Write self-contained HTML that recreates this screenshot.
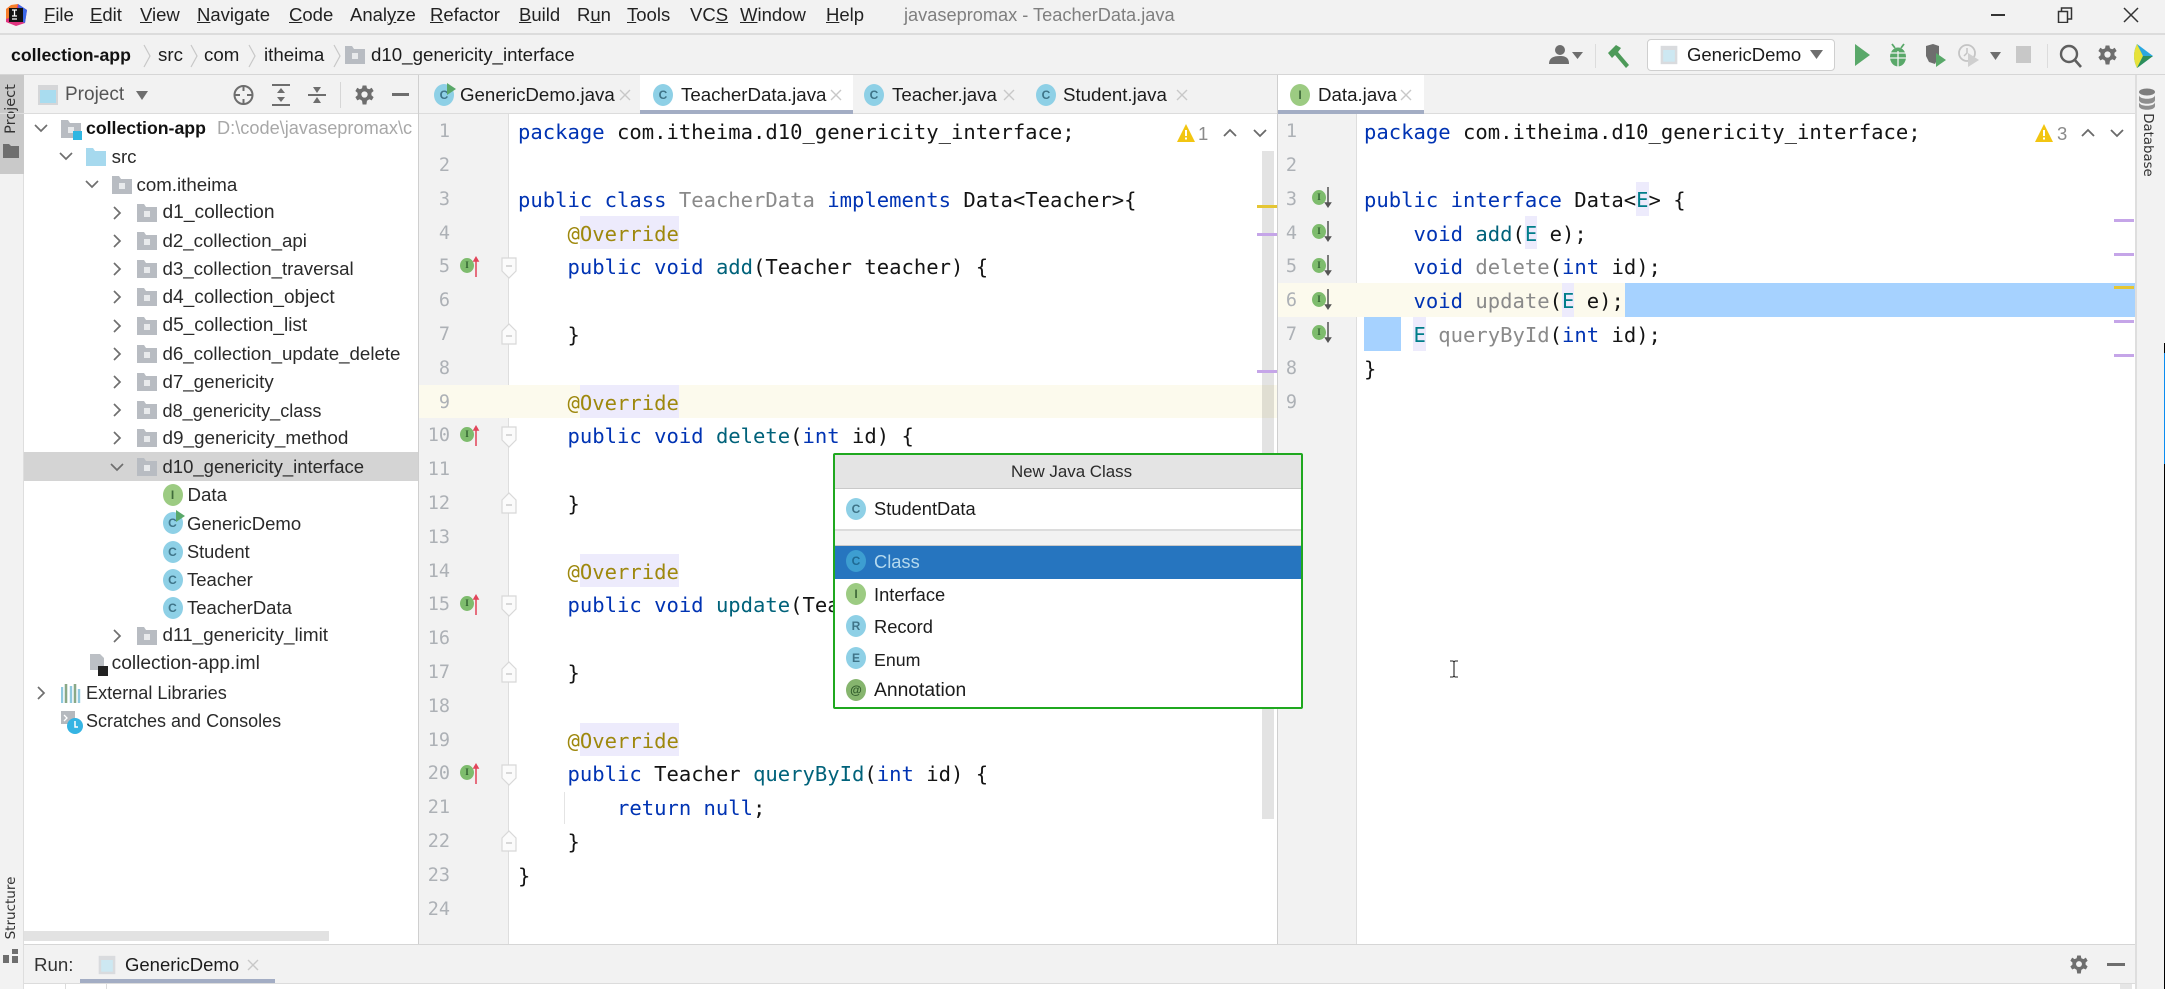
<!DOCTYPE html>
<html lang="en"><head><meta charset="utf-8"><title>javasepromax - TeacherData.java</title>
<style>
html,body{margin:0;padding:0;width:2165px;height:989px;overflow:hidden;background:#fff}
#r{position:relative;width:2165px;height:989px;overflow:hidden;background:#f2f2f2;font-family:"Liberation Sans",sans-serif;font-size:18.7px;color:#1c1c1c;filter:blur(.35px)}
#r div,#r svg{position:absolute}
.b{white-space:pre;line-height:28px;height:28px}
.m{white-space:pre;top:1px;line-height:28px;height:28px;color:#222;font-size:18.5px}
.t{white-space:pre;line-height:28px;height:28px;color:#2a2a2a}
.c{white-space:pre;height:33.8px;line-height:36.6px;font-family:"DejaVu Sans Mono","Liberation Mono",monospace;font-size:20.55px;color:#141414}
.n{height:33.8px;line-height:36.6px;font-family:"DejaVu Sans Mono","Liberation Mono",monospace;font-size:18.5px;color:#adb1b6;text-align:right;width:30px}
.k{color:#0033b3}.g{color:#8a8a8a}.f{color:#00627a}.o{color:#9e880d}.e{color:#007e8a}
.h{background:#edebfc;display:inline-block;height:33.8px;vertical-align:top;line-height:36.6px}
.ic{border-radius:50%;text-align:center;font-family:"Liberation Sans",sans-serif;font-weight:bold;width:20px;height:22px;line-height:22px;font-size:12px}
.C{background:#8ed0e6;color:#3f7488}.I{background:#9ccb82;color:#3f6a3a}.R{background:#8ed0e6;color:#3f7488}
.gi{width:14px;height:15px;line-height:15px;border-radius:50%;background:#7ebc6d;color:#2f5f2f;font:bold 9px/15px "Liberation Serif",serif;text-align:center}
.mk{height:3px;width:20px}
</style></head><body><div id="r">
<svg width="0" height="0" style="left:0;top:0"><defs>
<symbol id="fo" viewBox="0 0 20 18"><path d="M0 0h7l2 3h11v15H0z" fill="#b8bcc2"/><rect x="7" y="7" width="6" height="6" fill="#e8eaec"/></symbol>
<symbol id="fs" viewBox="0 0 16 24"><path d="M1 2h14v13l-7 7-7-7z" fill="#fbfbfb" stroke="#d8d8d8" stroke-width="1.2"/><path d="M5 10h6" stroke="#c2c2c2" stroke-width="1.2"/></symbol>
<symbol id="fe" viewBox="0 0 16 24"><path d="M1 22h14V9L8 2 1 9z" fill="#fbfbfb" stroke="#d8d8d8" stroke-width="1.2"/><path d="M5 14h6" stroke="#c2c2c2" stroke-width="1.2"/></symbol>
<symbol id="cr" viewBox="0 0 12 16"><path d="M3 2l6 6-6 6" fill="none" stroke="#6f6f6f" stroke-width="1.7"/></symbol>
<symbol id="cd" viewBox="0 0 16 12"><path d="M2 3l6 6 6-6" fill="none" stroke="#6f6f6f" stroke-width="1.7"/></symbol>
<symbol id="up" viewBox="0 0 10 22"><path d="M5 4v18" stroke="#e2455a" stroke-width="1.6"/><path d="M1.500 6L5 0l3.500 6z" fill="#e2455a"/></symbol>
<symbol id="dn" viewBox="0 0 10 22"><path d="M5 0v18" stroke="#555" stroke-width="1.6"/><path d="M1 16l4 6 4-6z" fill="#555"/></symbol>
<symbol id="wa" viewBox="0 0 18 18"><path d="M9 0l9 18H0z" fill="#f2c511"/><path d="M8 6h2v6H8zM8 13.500h2v2H8z" fill="#fff"/></symbol>
<symbol id="sep" viewBox="0 0 10 24"><path d="M2 1l6 11-6 11" fill="none" stroke="#c8c8c8" stroke-width="1.2"/></symbol>
<symbol id="gear" viewBox="0 0 20 20"><path d="M8 0h4l.6 3 2.400 1 2.600-1.600 2 3.400-2.300 2 0 2.400 2.300 2-2 3.400L15 14.500 12.600 16 12 20H8l-.6-4L5 14.500 2.400 15.600l-2-3.400 2.300-2v-2.400l-2.300-2 2-3.400L5 4l2.400-1z" fill="#6e6e6e"/><circle cx="10" cy="9.500" r="3.300" fill="#f2f2f2"/></symbol>
<symbol id="ap" viewBox="0 0 24 24"><rect x="2" y="1" width="20" height="22" fill="#d9dbde"/><rect x="5" y="6" width="14" height="14" fill="#cde8f2"/></symbol>
<symbol id="xx" viewBox="0 0 12 12"><path d="M1 1l10 10M11 1L1 11" stroke="#c8c8c8" stroke-width="1.400"/></symbol>
</defs></svg>

<!-- title bar -->
<div style="left:0;top:33px;width:2165px;height:2px;background:#dcdcdc"></div>
<svg style="left:4px;top:3px" width="24" height="24" viewBox="0 0 24 24"><path d="M2 6L14 1l9 6-2 13-9 3-10-4z" fill="#e0337f"/><path d="M2 6L7 2l7-1-4 12-8 3z" fill="#f77e2c"/><path d="M14 1l9 6-2 13-5-2z" fill="#3b68e8"/><rect x="5" y="5" width="14" height="14" fill="#111"/><path d="M8 7h5M10.500 7v6M8 13h5M8 16h5" stroke="#fff" stroke-width="1.300"/></svg>
<div class="m" style="left:44px"><u>F</u>ile</div>
<div class="m" style="left:90px"><u>E</u>dit</div>
<div class="m" style="left:140px"><u>V</u>iew</div>
<div class="m" style="left:197px"><u>N</u>avigate</div>
<div class="m" style="left:289px"><u>C</u>ode</div>
<div class="m" style="left:350px">Anal<u>y</u>ze</div>
<div class="m" style="left:430px"><u>R</u>efactor</div>
<div class="m" style="left:519px"><u>B</u>uild</div>
<div class="m" style="left:577px">R<u>u</u>n</div>
<div class="m" style="left:627px"><u>T</u>ools</div>
<div class="m" style="left:690px">VC<u>S</u></div>
<div class="m" style="left:740px"><u>W</u>indow</div>
<div class="m" style="left:826px"><u>H</u>elp</div>
<div class="m" style="left:904px;color:#7f7f7f;font-size:18.2px">javasepromax - TeacherData.java</div>
<div style="left:1991px;top:14px;width:14px;height:2px;background:#333"></div>
<svg style="left:2057px;top:7px" width="16" height="16" viewBox="0 0 16 16"><path d="M1.500 4.500h9v11h-9zM4.500 4V1h10v11H11" fill="none" stroke="#333" stroke-width="1.500"/></svg>
<svg style="left:2123px;top:7px" width="16" height="16" viewBox="0 0 16 16"><path d="M1 1l14 14M15 1L1 15" stroke="#333" stroke-width="1.500"/></svg>

<!-- nav bar -->
<div style="left:0;top:74px;width:2165px;height:1px;background:#d6d6d6"></div>
<div class="b" style="left:11px;top:41px;font-weight:bold;font-size:17.7px;color:#111">collection-app</div>
<svg style="left:142px;top:44px" width="10" height="24"><use href="#sep"/></svg>
<div class="b" style="left:158px;top:41px">src</div>
<svg style="left:189px;top:44px" width="10" height="24"><use href="#sep"/></svg>
<div class="b" style="left:204px;top:41px">com</div>
<svg style="left:247px;top:44px" width="10" height="24"><use href="#sep"/></svg>
<div class="b" style="left:264px;top:41px">itheima</div>
<svg style="left:332px;top:44px" width="10" height="24"><use href="#sep"/></svg>
<svg style="left:345px;top:46px" width="20" height="18"><use href="#fo"/></svg>
<div class="b" style="left:371px;top:41px">d10_genericity_interface</div>

<svg style="left:1548px;top:44px" width="22" height="20" viewBox="0 0 22 20"><circle cx="12" cy="6" r="5" fill="#6e6e6e"/><path d="M1 20c0-6 4-8 11-8s9 3 9 8z" fill="#6e6e6e"/></svg>
<svg style="left:1572px;top:52px" width="12" height="7"><path d="M0 0h11L5.500 7z" fill="#6e6e6e"/></svg>
<div style="left:1595px;top:44px;width:1px;height:24px;background:#dcdcdc"></div>
<svg style="left:1607px;top:44px" width="24" height="24" viewBox="0 0 24 24"><path d="M1 9l8-8 5 3-3 4 11 13-3 3L8 11l-3 3z" fill="#4d9a59"/></svg>
<div style="left:1647px;top:39px;width:186px;height:30px;background:#fff;border:1.500px solid #cfcfcf;border-radius:4px"></div>
<svg style="left:1659px;top:44px" width="20" height="22"><use href="#ap"/></svg>
<div class="b" style="left:1687px;top:41px;font-size:18.500px">GenericDemo</div>
<svg style="left:1810px;top:50px" width="14" height="9"><path d="M0 0h13L6.500 9z" fill="#6e6e6e"/></svg>
<svg style="left:1855px;top:44px" width="16" height="22"><path d="M0 0l15 11L0 22z" fill="#59a869"/></svg>
<svg style="left:1888px;top:43px" width="20" height="24" viewBox="0 0 20 24"><path d="M4 1l3 4M16 1l-3 4" stroke="#59a869" stroke-width="1.800" fill="none"/><ellipse cx="10" cy="14" rx="8" ry="9.500" fill="#59a869"/><path d="M2 10h16M2 15h16M10 8v16" stroke="#f2f2f2" stroke-width="1.300"/></svg>
<svg style="left:1925px;top:43px" width="22" height="24" viewBox="0 0 22 24"><path d="M1 3l7-2 6 2v10l-4 8-6-2-3-6z" fill="#6e6e6e"/><path d="M11 10l10 7-10 7z" fill="#59a869"/></svg>
<svg style="left:1958px;top:43px" width="22" height="24" viewBox="0 0 22 24"><circle cx="9" cy="10" r="8" fill="none" stroke="#c4c4c4" stroke-width="1.800"/><path d="M9 5v5l-3 3" stroke="#c4c4c4" stroke-width="1.500" fill="none"/><path d="M10 10l11 7-11 7z" fill="#cfcfcf"/></svg>
<svg style="left:1990px;top:52px" width="12" height="8"><path d="M0 0h11L5.500 8z" fill="#6e6e6e"/></svg>
<div style="left:2016px;top:46px;width:15px;height:17px;background:#c8c8c8"></div>
<div style="left:2047px;top:44px;width:1px;height:24px;background:#dcdcdc"></div>
<svg style="left:2059px;top:44px" width="24" height="24" viewBox="0 0 24 24"><circle cx="10" cy="10" r="8" fill="none" stroke="#5f5f5f" stroke-width="2.400"/><path d="M15 15l7 8" stroke="#5f5f5f" stroke-width="2.600"/></svg>
<svg style="left:2098px;top:45px" width="19" height="20"><use href="#gear"/></svg>
<svg style="left:2134px;top:44px" width="20" height="24" viewBox="0 0 20 24"><path d="M3 0l16 12L3 24C-1 16-1 8 3 0z" fill="#2aa7e0"/><path d="M3 0c-4 8-4 16 0 24l6-12z" fill="#e7e23a"/><path d="M9 12L3 24l16-12z" fill="#2d8e5a"/></svg>

<!-- tool stripes -->
<div style="left:0;top:75px;width:24px;height:914px;background:#f2f2f2;border-right:1px solid #dedede;box-sizing:border-box"></div>
<div style="left:0;top:75px;width:24px;height:99px;background:#c9c9c9"></div>
<div style="left:-24px;top:99px;width:70px;height:20px;line-height:20px;text-align:center;transform:rotate(-90deg);font-size:14.500px;font-family:'DejaVu Sans',sans-serif;color:#333">Project</div>
<svg style="left:3px;top:144px" width="16" height="14"><path d="M0 0h6l2 2h8v12H0z" fill="#6e6e6e"/></svg>
<div style="left:-29px;top:898px;width:80px;height:20px;line-height:20px;text-align:center;transform:rotate(-90deg);font-size:13.500px;font-family:'DejaVu Sans',sans-serif;color:#333">Structure</div>
<svg style="left:3px;top:949px" width="16" height="15"><path d="M9 0h6v5H9zM0 6h6v8H0zM9 7h6v7H9z" fill="#6e6e6e"/></svg>

<div style="left:2135px;top:75px;width:29px;height:914px;background:#f2f2f2;border-left:2px solid #dedede;box-sizing:border-box"></div>
<svg style="left:2138px;top:88px" width="18" height="22" viewBox="0 0 18 22"><ellipse cx="9" cy="4" rx="8" ry="3.500" fill="#7e7e7e"/><path d="M1 7c0 5 16 5 16 0v5c0 5-16 5-16 0zM1 14c0 5 16 5 16 0v4c0 5-16 5-16 0z" fill="#8e8e8e"/></svg>
<div style="left:2114px;top:135px;width:66px;height:20px;line-height:20px;text-align:center;transform:rotate(90deg);font-size:13.300px;font-family:'DejaVu Sans',sans-serif;color:#333">Database</div>
<div style="left:2164px;top:343px;width:1px;height:646px;background:#000"></div>
<div style="left:2164px;top:353px;width:1px;height:111px;background:#0a8cf0"></div>

<!-- project panel -->
<div style="left:24px;top:75px;width:395px;height:38px;background:#f2f2f2"></div>
<svg style="left:38px;top:85px" width="20" height="20" viewBox="0 0 20 20"><rect width="20" height="20" fill="#d5d6d8"/><rect x="2" y="5" width="16" height="13" fill="#a9dcef"/></svg>
<div class="b" style="left:65px;top:81px;color:#555;font-size:19px">Project</div>
<svg style="left:136px;top:91px" width="13" height="9"><path d="M0 0h12L6 9z" fill="#6e6e6e"/></svg>
<svg style="left:233px;top:84px" width="21" height="22" viewBox="0 0 21 22"><circle cx="10.500" cy="11" r="9" fill="none" stroke="#6e6e6e" stroke-width="2"/><path d="M10.500 1v6M10.500 15v6M1 11h6M14 11h6" stroke="#6e6e6e" stroke-width="2"/></svg>
<svg style="left:272px;top:84px" width="18" height="22" viewBox="0 0 18 22"><path d="M0 1h18M0 21h18" stroke="#6e6e6e" stroke-width="2"/><path d="M9 4l4 5H5zM9 18l4-5H5z" fill="#6e6e6e"/></svg>
<svg style="left:308px;top:84px" width="18" height="22" viewBox="0 0 18 22"><path d="M0 11h18" stroke="#6e6e6e" stroke-width="2"/><path d="M9 9l4-6H5zM9 13l4 6H5z" fill="#6e6e6e"/></svg>
<div style="left:340px;top:82px;width:1px;height:26px;background:#d6d6d6"></div>
<svg style="left:355px;top:85px" width="19" height="20"><use href="#gear"/></svg>
<div style="left:392px;top:93px;width:17px;height:3px;background:#6e6e6e"></div>
<div style="left:24px;top:113px;width:395px;height:876px;background:#fff"></div>
<div style="left:0;top:113px;width:2135px;height:1px;background:#dcdcdc"></div>
<div style="left:24px;top:452px;width:395px;height:29px;background:#d4d4d4"></div>

<!-- tree -->
<svg style="left:33px;top:122px" width="16" height="12"><use href="#cd"/></svg>
<svg style="left:61px;top:120px" width="20" height="18"><use href="#fo"/></svg><div style="left:73px;top:131px;width:9px;height:9px;background:#2fb6e2"></div>
<div class="t" style="left:86px;top:114px;font-weight:bold;font-size:17.700px;color:#111">collection-app</div>
<div class="t" style="left:217px;top:114px;width:202px;overflow:hidden;color:#a8a8a8;font-size:18.200px">D:\code\javasepromax\c</div>
<svg style="left:58px;top:150px" width="16" height="12"><use href="#cd"/></svg>
<svg style="left:86px;top:148px" width="20" height="18" viewBox="0 0 20 18"><path d="M0 0h7l2 3h11v15H0z" fill="#a6d9ee"/></svg>
<div class="t" style="left:111.600px;top:143px">src</div>
<svg style="left:84px;top:178px" width="16" height="12"><use href="#cd"/></svg>
<svg style="left:112px;top:176px" width="20" height="18"><use href="#fo"/></svg>
<div class="t" style="left:136.500px;top:171px">com.itheima</div>

<svg style="left:111px;top:205px" width="12" height="16"><use href="#cr"/></svg><svg style="left:137px;top:204px" width="20" height="18"><use href="#fo"/></svg><div class="t" style="left:162.500px;top:199px;font-size:19.200px">d1_collection</div>
<svg style="left:111px;top:233px" width="12" height="16"><use href="#cr"/></svg><svg style="left:137px;top:232px" width="20" height="18"><use href="#fo"/></svg><div class="t" style="left:162.500px;top:227px">d2_collection_api</div>
<svg style="left:111px;top:261px" width="12" height="16"><use href="#cr"/></svg><svg style="left:137px;top:260px" width="20" height="18"><use href="#fo"/></svg><div class="t" style="left:162.500px;top:255px">d3_collection_traversal</div>
<svg style="left:111px;top:289px" width="12" height="16"><use href="#cr"/></svg><svg style="left:137px;top:288px" width="20" height="18"><use href="#fo"/></svg><div class="t" style="left:162.500px;top:284px;font-size:19px">d4_collection_object</div>
<svg style="left:111px;top:318px" width="12" height="16"><use href="#cr"/></svg><svg style="left:137px;top:317px" width="20" height="18"><use href="#fo"/></svg><div class="t" style="left:162.500px;top:312px;font-size:19px">d5_collection_list</div>
<svg style="left:111px;top:346px" width="12" height="16"><use href="#cr"/></svg><svg style="left:137px;top:345px" width="20" height="18"><use href="#fo"/></svg><div class="t" style="left:162.500px;top:340px">d6_collection_update_delete</div>
<svg style="left:111px;top:374px" width="12" height="16"><use href="#cr"/></svg><svg style="left:137px;top:373px" width="20" height="18"><use href="#fo"/></svg><div class="t" style="left:162.500px;top:368px">d7_genericity</div>
<svg style="left:111px;top:402px" width="12" height="16"><use href="#cr"/></svg><svg style="left:137px;top:401px" width="20" height="18"><use href="#fo"/></svg><div class="t" style="left:162.500px;top:397px;font-size:18.100px">d8_genericity_class</div>
<svg style="left:111px;top:430px" width="12" height="16"><use href="#cr"/></svg><svg style="left:137px;top:429px" width="20" height="18"><use href="#fo"/></svg><div class="t" style="left:162.500px;top:425px;font-size:18.900px">d9_genericity_method</div>
<svg style="left:109px;top:461px" width="16" height="12"><use href="#cd"/></svg><svg style="left:137px;top:458px" width="20" height="18"><use href="#fo"/></svg><div class="t" style="left:162.500px;top:453px;font-size:18.500px">d10_genericity_interface</div>

<div class="ic I" style="left:162.500px;top:484px">I</div><div class="t" style="left:187.500px;top:481px">Data</div>
<div class="ic C" style="left:162.500px;top:512px">C</div><svg style="left:176px;top:510px" width="9" height="12"><path d="M0 0l9 6-9 6z" fill="#59a869"/></svg><div class="t" style="left:187px;top:509.500px;font-size:18.500px">GenericDemo</div>
<div class="ic C" style="left:162.500px;top:540.500px">C</div><div class="t" style="left:187px;top:537.500px;font-size:18.200px">Student</div>
<div class="ic C" style="left:162.500px;top:569px">C</div><div class="t" style="left:187px;top:566px;font-size:18.500px">Teacher</div>
<div class="ic C" style="left:162.500px;top:597px">C</div><div class="t" style="left:187px;top:594px;font-size:18.500px">TeacherData</div>
<svg style="left:111px;top:628px" width="12" height="16"><use href="#cr"/></svg><svg style="left:137px;top:627px" width="20" height="18"><use href="#fo"/></svg><div class="t" style="left:162.500px;top:622px;font-size:18.900px">d11_genericity_limit</div>
<svg style="left:88px;top:654px" width="20" height="22" viewBox="0 0 20 22"><path d="M2 0h10l4 4v12H2z" fill="#bcc0c5"/><rect x="10" y="12" width="10" height="10" fill="#222"/></svg>
<div class="t" style="left:111.600px;top:650px;font-size:19.200px">collection-app.iml</div>
<svg style="left:35px;top:685px" width="12" height="16"><use href="#cr"/></svg>
<svg style="left:61px;top:683px" width="20" height="20" viewBox="0 0 20 20"><path d="M1 4v16M5 1v19M10 3v17M14 1v19M18 6v14" stroke-width="2.400" fill="none" stroke="#8fc9df"/><path d="M5 1v19M14 1v19" stroke="#8aa886" stroke-width="2.400"/></svg>
<div class="t" style="left:86px;top:679px;font-size:18.100px">External Libraries</div>
<svg style="left:60px;top:711px" width="24" height="24" viewBox="0 0 24 24"><rect x="1" y="0" width="14" height="13" fill="#b5b9be"/><path d="M4 4l3 3-3 3" stroke="#fff" fill="none" stroke-width="1.300"/><circle cx="15" cy="15" r="8" fill="#35b4e3"/><path d="M15 10v6h3" stroke="#fff" fill="none" stroke-width="1.500"/></svg>
<div class="t" style="left:86px;top:707px;font-size:18px">Scratches and Consoles</div>
<div style="left:24px;top:931px;width:305px;height:10px;background:#e2e2e2"></div>

<!-- tabs -->
<div style="left:418px;top:75px;width:1px;height:870px;background:#cfcfcf"></div>
<div style="left:1277px;top:75px;width:1px;height:870px;background:#cfcfcf"></div>
<div style="left:640px;top:75px;width:213px;height:38px;background:#fff"></div>
<div style="left:640px;top:110px;width:213px;height:4px;background:#a3adc4"></div>
<div style="left:1278px;top:75px;width:146px;height:38px;background:#fff"></div>
<div style="left:1278px;top:110px;width:146px;height:4px;background:#a3adc4"></div>

<div class="ic C" style="left:434px;top:84px">C</div><svg style="left:447px;top:83px" width="9" height="12"><path d="M0 0l9 6-9 6z" fill="#59a869"/></svg>
<div class="b" style="left:460px;top:81px">GenericDemo.java</div><svg style="left:619px;top:89px" width="12" height="12"><use href="#xx"/></svg>
<div class="ic C" style="left:653px;top:84px">C</div><div class="b" style="left:681px;top:81px">TeacherData.java</div><svg style="left:830px;top:89px" width="12" height="12"><use href="#xx"/></svg>
<div class="ic C" style="left:864px;top:84px">C</div><div class="b" style="left:892px;top:81px">Teacher.java</div><svg style="left:1003px;top:89px" width="12" height="12"><use href="#xx"/></svg>
<div class="ic C" style="left:1036px;top:84px">C</div><div class="b" style="left:1063px;top:81px">Student.java</div><svg style="left:1176px;top:89px" width="12" height="12"><use href="#xx"/></svg>
<div class="ic I" style="left:1290px;top:84px">I</div><div class="b" style="left:1318px;top:81px">Data.java</div><svg style="left:1400px;top:89px" width="12" height="12"><use href="#xx"/></svg>

<!-- editor 1 -->
<div style="left:419px;top:114px;width:858px;height:830px;background:#fff"></div>
<div style="left:419px;top:114px;width:89px;height:830px;background:#f2f2f2"></div>
<div style="left:508px;top:114px;width:1px;height:830px;background:#dedede"></div>
<div style="left:419px;top:384.600px;width:858px;height:33.800px;background:#fcfaed"></div>
<div style="left:1262px;top:151px;width:12px;height:668px;background:#e3e3e3"></div>
<div style="left:1262px;top:384.600px;width:12px;height:33.800px;background:#e0ded2"></div>
<div class="mk" style="left:1257px;top:205px;background:#e5c634"></div>
<div class="mk" style="left:1257px;top:233px;background:#c5a5e8"></div>
<div class="mk" style="left:1257px;top:370px;background:#c5a5e8"></div>
<svg style="left:1177px;top:124px" width="18" height="18"><use href="#wa"/></svg>
<div class="b" style="left:1198px;top:120px;color:#8a8a8a;font-size:18.500px">1</div>
<svg style="left:1222px;top:127px" width="16" height="10"><path d="M2 9l6-6 6 6" fill="none" stroke="#6a6a6a" stroke-width="1.800"/></svg>
<svg style="left:1252px;top:128px" width="16" height="10"><path d="M2 2l6 6 6-6" fill="none" stroke="#6a6a6a" stroke-width="1.800"/></svg>

<div class="n" style="left:420px;top:114.200px">1</div>
<div class="n" style="left:420px;top:148px">2</div>
<div class="n" style="left:420px;top:181.800px">3</div>
<div class="n" style="left:420px;top:215.600px">4</div>
<div class="n" style="left:420px;top:249.400px">5</div>
<div class="n" style="left:420px;top:283.200px">6</div>
<div class="n" style="left:420px;top:317px">7</div>
<div class="n" style="left:420px;top:350.800px">8</div>
<div class="n" style="left:420px;top:384.600px">9</div>
<div class="n" style="left:420px;top:418.400px">10</div>
<div class="n" style="left:420px;top:452.200px">11</div>
<div class="n" style="left:420px;top:486px">12</div>
<div class="n" style="left:420px;top:519.800px">13</div>
<div class="n" style="left:420px;top:553.600px">14</div>
<div class="n" style="left:420px;top:587.400px">15</div>
<div class="n" style="left:420px;top:621.200px">16</div>
<div class="n" style="left:420px;top:655px">17</div>
<div class="n" style="left:420px;top:688.800px">18</div>
<div class="n" style="left:420px;top:722.600px">19</div>
<div class="n" style="left:420px;top:756.400px">20</div>
<div class="n" style="left:420px;top:790.200px">21</div>
<div class="n" style="left:420px;top:824px">22</div>
<div class="n" style="left:420px;top:857.800px">23</div>
<div class="n" style="left:420px;top:891.600px">24</div>

<div class="gi" style="left:460px;top:258px">I</div><svg style="left:471px;top:256px" width="10" height="21"><use href="#up"/></svg>
<div class="gi" style="left:460px;top:427px">I</div><svg style="left:471px;top:425px" width="10" height="21"><use href="#up"/></svg>
<div class="gi" style="left:460px;top:596px">I</div><svg style="left:471px;top:594px" width="10" height="21"><use href="#up"/></svg>
<div class="gi" style="left:460px;top:765px">I</div><svg style="left:471px;top:763px" width="10" height="21"><use href="#up"/></svg>

<svg style="left:501px;top:256px" width="16" height="24"><use href="#fs"/></svg>
<svg style="left:501px;top:322px" width="16" height="24"><use href="#fe"/></svg>
<svg style="left:501px;top:425px" width="16" height="24"><use href="#fs"/></svg>
<svg style="left:501px;top:491px" width="16" height="24"><use href="#fe"/></svg>
<svg style="left:501px;top:594px" width="16" height="24"><use href="#fs"/></svg>
<svg style="left:501px;top:660px" width="16" height="24"><use href="#fe"/></svg>
<svg style="left:501px;top:763px" width="16" height="24"><use href="#fs"/></svg>
<svg style="left:501px;top:829px" width="16" height="24"><use href="#fe"/></svg>
<div style="left:564px;top:792px;width:1px;height:32px;background:#e4e4e4"></div>

<div class="c" style="left:518px;top:114.200px"><span class="k">package</span> com.itheima.d10_genericity_interface;</div>
<div class="c" style="left:518px;top:181.800px"><span class="k">public class</span> <span class="g">TeacherData</span> <span class="k">implements</span> Data&lt;Teacher&gt;{</div>
<div class="c" style="left:518px;top:215.600px">    <span class="o">@</span><span class="o h">Override</span></div>
<div class="c" style="left:518px;top:249.400px">    <span class="k">public void</span> <span class="f">add</span>(Teacher teacher) {</div>
<div class="c" style="left:518px;top:317px">    }</div>
<div class="c" style="left:518px;top:384.600px">    <span class="o">@</span><span class="o h">Override</span></div>
<div class="c" style="left:518px;top:418.400px">    <span class="k">public void</span> <span class="f">delete</span>(<span class="k">int</span> id) {</div>
<div class="c" style="left:518px;top:486px">    }</div>
<div class="c" style="left:518px;top:553.600px">    <span class="o">@</span><span class="o h">Override</span></div>
<div class="c" style="left:518px;top:587.400px">    <span class="k">public void</span> <span class="f">update</span>(Teacher teacher) {</div>
<div class="c" style="left:518px;top:655px">    }</div>
<div class="c" style="left:518px;top:722.600px">    <span class="o">@</span><span class="o h">Override</span></div>
<div class="c" style="left:518px;top:756.400px">    <span class="k">public</span> Teacher <span class="f">queryById</span>(<span class="k">int</span> id) {</div>
<div class="c" style="left:518px;top:790.200px">        <span class="k">return null</span>;</div>
<div class="c" style="left:518px;top:824px">    }</div>
<div class="c" style="left:518px;top:857.800px">}</div>

<!-- editor 2 -->
<div style="left:1278px;top:114px;width:857px;height:830px;background:#fff"></div>
<div style="left:1278px;top:114px;width:78px;height:830px;background:#f2f2f2"></div>
<div style="left:1356px;top:114px;width:1px;height:830px;background:#dedede"></div>
<div style="left:1278px;top:283.200px;width:347px;height:33.800px;background:#fcfaed"></div>
<div style="left:1625px;top:283.200px;width:510px;height:33.800px;background:#a6d2ff"></div>
<div style="left:1364px;top:317px;width:37px;height:33.800px;background:#a6d2ff"></div>
<div class="mk" style="left:2114px;top:219px;background:#c5a5e8"></div>
<div class="mk" style="left:2114px;top:253px;background:#c5a5e8"></div>
<div class="mk" style="left:2114px;top:286px;background:#e5c634"></div>
<div class="mk" style="left:2114px;top:320px;background:#c5a5e8"></div>
<div class="mk" style="left:2114px;top:354px;background:#c5a5e8"></div>
<svg style="left:2035px;top:124px" width="18" height="18"><use href="#wa"/></svg>
<div class="b" style="left:2057px;top:120px;color:#8a8a8a;font-size:18.500px">3</div>
<svg style="left:2080px;top:127px" width="16" height="10"><path d="M2 9l6-6 6 6" fill="none" stroke="#6a6a6a" stroke-width="1.800"/></svg>
<svg style="left:2109px;top:128px" width="16" height="10"><path d="M2 2l6 6 6-6" fill="none" stroke="#6a6a6a" stroke-width="1.800"/></svg>

<div class="n" style="left:1267px;top:114.200px">1</div>
<div class="n" style="left:1267px;top:148px">2</div>
<div class="n" style="left:1267px;top:181.800px">3</div>
<div class="n" style="left:1267px;top:215.600px">4</div>
<div class="n" style="left:1267px;top:249.400px">5</div>
<div class="n" style="left:1267px;top:283.200px">6</div>
<div class="n" style="left:1267px;top:317px">7</div>
<div class="n" style="left:1267px;top:350.800px">8</div>
<div class="n" style="left:1267px;top:384.600px">9</div>

<div class="gi" style="left:1312px;top:190px">I</div><svg style="left:1323px;top:187px" width="10" height="21"><use href="#dn"/></svg>
<div class="gi" style="left:1312px;top:224px">I</div><svg style="left:1323px;top:221px" width="10" height="21"><use href="#dn"/></svg>
<div class="gi" style="left:1312px;top:258px">I</div><svg style="left:1323px;top:255px" width="10" height="21"><use href="#dn"/></svg>
<div class="gi" style="left:1312px;top:292px">I</div><svg style="left:1323px;top:289px" width="10" height="21"><use href="#dn"/></svg>
<div class="gi" style="left:1312px;top:325px">I</div><svg style="left:1323px;top:322px" width="10" height="21"><use href="#dn"/></svg>

<div class="c" style="left:1364px;top:114.200px"><span class="k">package</span> com.itheima.d10_genericity_interface;</div>
<div class="c" style="left:1364px;top:181.800px"><span class="k">public interface</span> Data&lt;<span class="e h">E</span>&gt; {</div>
<div class="c" style="left:1364px;top:215.600px">    <span class="k">void</span> <span class="f">add</span>(<span class="e h">E</span> e);</div>
<div class="c" style="left:1364px;top:249.400px">    <span class="k">void</span> <span class="g">delete</span>(<span class="k">int</span> id);</div>
<div class="c" style="left:1364px;top:283.200px">    <span class="k">void</span> <span class="g">update</span>(<span class="e h">E</span> e);</div>
<div class="c" style="left:1364px;top:317px">    <span class="e h">E</span> <span class="g">queryById</span>(<span class="k">int</span> id);</div>
<div class="c" style="left:1364px;top:350.800px">}</div>

<svg style="left:1449px;top:660px" width="10" height="18" viewBox="0 0 10 18"><path d="M1 1h3l1 1 1-1h3M5 2v14M1 17h3l1-1 1 1h3" fill="none" stroke="#222" stroke-width="1.100"/></svg>

<!-- popup -->
<div style="left:833px;top:453px;width:470px;height:256px;border:2px solid #1fa81f;border-radius:2px;box-sizing:border-box;background:#fff;z-index:5;overflow:hidden">
 <div style="left:0;top:0;width:466px;height:34px;padding-left:7px;box-sizing:border-box;background:#e4e4e4;border-bottom:1.500px solid #c9c9c9;text-align:center;line-height:34px;font-size:16.900px;color:#2a2a2a">New Java Class</div>
 <div class="ic C" style="left:11px;top:43px">C</div>
 <div class="b" style="left:39px;top:40px;font-size:18.300px">StudentData</div>
 <div style="left:0;top:74px;width:466px;height:2px;background:#dcdcdc"></div>
 <div style="left:0;top:76px;width:466px;height:15px;background:#f2f2f2"></div>
 <div style="left:0;top:90px;width:466px;height:1px;background:#c9c9c9"></div>
 <div style="left:0;top:91px;width:466px;height:33px;background:#2675bf"></div>
 <div class="ic" style="left:11px;top:95px;background:#3d9ed1;color:#1f6a94">C</div>
 <div class="b" style="left:39px;top:93px;color:#b4d9ee;font-size:18.300px">Class</div>
 <div class="ic I" style="left:11px;top:128px">I</div><div class="b" style="left:39px;top:126px;font-size:18.300px">Interface</div>
 <div class="ic R" style="left:11px;top:160px">R</div><div class="b" style="left:39px;top:158px;font-size:18.300px">Record</div>
 <div class="ic R" style="left:11px;top:192px">E</div><div class="b" style="left:39px;top:191px;font-size:17.800px">Enum</div>
 <div class="ic" style="left:11px;top:224px;background:#86b56e;color:#2f5a2a">@</div><div class="b" style="left:39px;top:222px;font-size:19.300px">Annotation</div>
</div>

<!-- run bar -->
<div style="left:24px;top:944px;width:2111px;height:1px;background:#d6d6d6"></div>
<div style="left:24px;top:945px;width:2111px;height:38px;background:#f2f2f2"></div>
<div style="left:24px;top:983px;width:2111px;height:1px;background:#dcdcdc"></div>
<div style="left:24px;top:984px;width:2111px;height:5px;background:#fff"></div>
<div style="left:65px;top:984px;width:1px;height:5px;background:#dcdcdc"></div>
<div style="left:106px;top:984px;width:1px;height:5px;background:#dcdcdc"></div>
<div class="b" style="left:34px;top:951px;color:#333">Run:</div>
<svg style="left:97px;top:954px" width="20" height="22"><use href="#ap"/></svg>
<div class="b" style="left:125px;top:951px;font-size:18.500px">GenericDemo</div>
<svg style="left:247px;top:959px" width="12" height="12"><use href="#xx"/></svg>
<div style="left:80px;top:979px;width:195px;height:4px;background:#a3adc4"></div>
<svg style="left:2070px;top:955px" width="18" height="19"><use href="#gear"/></svg>
<div style="left:2107px;top:963px;width:18px;height:3px;background:#6e6e6e"></div>
<div style="left:2120px;top:984px;width:12px;height:5px;background:#e6e6e6"></div>
</div></body></html>
